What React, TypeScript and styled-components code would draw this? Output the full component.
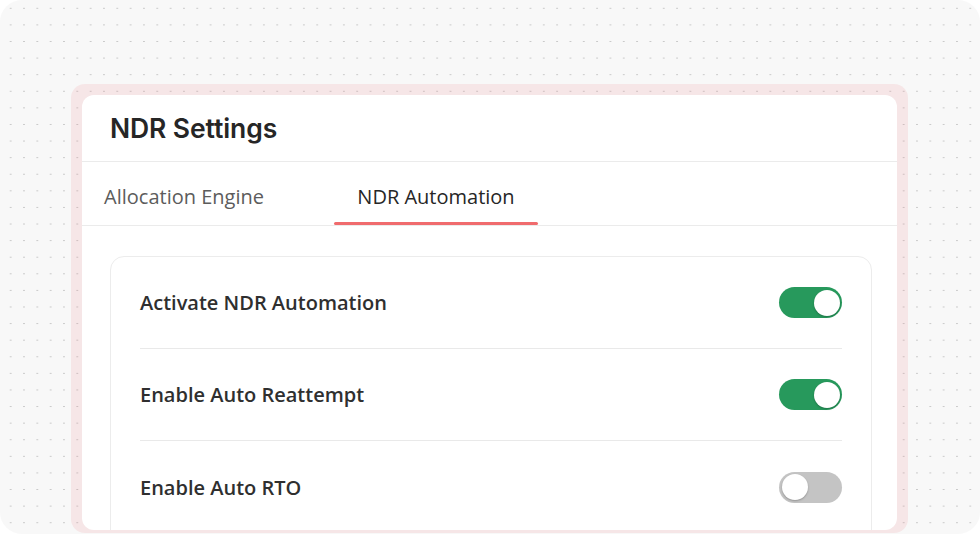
import React, { useState } from "react";
import styled, { createGlobalStyle } from "styled-components";

const Global = createGlobalStyle`
  html, body { margin: 0; padding: 0; background: #ffffff; }
  body { font-family: "Open Sans", "Noto Sans", sans-serif; }
  * { box-sizing: border-box; }
`;

const Canvas = styled.div`
  width: 980px;
  height: 534px;
  overflow: hidden;
  border-radius: 22px;
  background-color: #f8f8f8;
  background-image: radial-gradient(circle, #c9c9c9 0.7px, transparent 1px);
  background-size: 13.33px 16.6px;
  background-position: 4px 0px;
  padding: 84px 72px 0 71px;
`;

const Frame = styled.div`
  height: 449px;
  border-radius: 14px;
  background: rgba(240, 110, 115, 0.12);
  padding: 11px 11px 0 11px;
`;

const Card = styled.div`
  height: 435px;
  background: #ffffff;
  border-radius: 12px;
  overflow: hidden;
  display: flex;
  flex-direction: column;
`;

const Header = styled.div`
  flex-shrink: 0;
  height: 67px;
  display: flex;
  align-items: center;
  padding-left: 28px;
  border-bottom: 1.5px solid #ebebeb;
`;

const Title = styled.h1`
  margin: 0;
  font-family: "Inter", "Open Sans", sans-serif;
  font-weight: 600;
  font-size: 26.5px;
  letter-spacing: -0.1px;
  color: #262626;
`;

const TabBar = styled.div`
  flex-shrink: 0;
  display: flex;
  gap: 48px;
  height: 64px;
  border-bottom: 1.5px solid #ebebeb;
`;

const Tab = styled.button<{ $active?: boolean }>`
  width: 204px;
  border: none;
  background: none;
  padding: 5px 0 0 0;
  cursor: pointer;
  position: relative;
  font-family: "Open Sans", sans-serif;
  font-size: 20px;
  font-weight: ${(p) => (p.$active ? 500 : 400)};
  color: ${(p) => (p.$active ? "#262626" : "#5c5c5c")};
  &::after {
    content: "";
    position: absolute;
    left: 0;
    right: 0;
    bottom: 0;
    height: 3px;
    border-radius: 2px;
    background: ${(p) => (p.$active ? "#f06b6d" : "transparent")};
  }
`;

const Body = styled.div`
  padding: 30px 25px 0 28px;
  flex: 1;
`;

const Box = styled.div`
  border: 1.5px solid #ececec;
  border-radius: 14px;
  padding: 0 29px 0 29px;
  height: 400px;
`;

const Row = styled.div`
  height: 92px;
  display: flex;
  align-items: center;
  justify-content: space-between;
  border-bottom: 1.5px solid #e9e9e9;
  &:last-child { border-bottom: none; }
`;

const Label = styled.span`
  font-family: "Open Sans", sans-serif;
  font-weight: 600;
  font-size: 20px;
  color: #2f2f2f;
`;

const Switch = styled.button<{ $on: boolean }>`
  width: 63px;
  height: 31px;
  border-radius: 16px;
  border: none;
  padding: 0;
  position: relative;
  cursor: pointer;
  background: ${(p) => (p.$on ? "#27995c" : "#c4c4c4")};
  &::after {
    content: "";
    position: absolute;
    top: 2.5px;
    left: ${(p) => (p.$on ? "34.5px" : "2.5px")};
    width: 26px;
    height: 26px;
    border-radius: 50%;
    background: #ffffff;
    box-shadow: 0 1px 2px rgba(0, 0, 0, 0.25);
  }
`;

const settings = [
  { label: "Activate NDR Automation", on: true },
  { label: "Enable Auto Reattempt", on: true },
  { label: "Enable Auto RTO", on: false },
];

export default function App() {
  const [values, setValues] = useState(settings.map((s) => s.on));
  const [tab, setTab] = useState(1);
  return (
    <>
      <Global />
      <Canvas>
        <Frame>
          <Card>
            <Header>
              <Title>NDR Settings</Title>
            </Header>
            <TabBar>
              {["Allocation Engine", "NDR Automation"].map((t, i) => (
                <Tab key={t} $active={tab === i} onClick={() => setTab(i)}>
                  {t}
                </Tab>
              ))}
            </TabBar>
            <Body>
              <Box>
                {settings.map((s, i) => (
                  <Row key={s.label}>
                    <Label>{s.label}</Label>
                    <Switch
                      $on={values[i]}
                      aria-label={s.label}
                      onClick={() =>
                        setValues((v) => v.map((x, j) => (j === i ? !x : x)))
                      }
                    />
                  </Row>
                ))}
              </Box>
            </Body>
          </Card>
        </Frame>
      </Canvas>
    </>
  );
}
